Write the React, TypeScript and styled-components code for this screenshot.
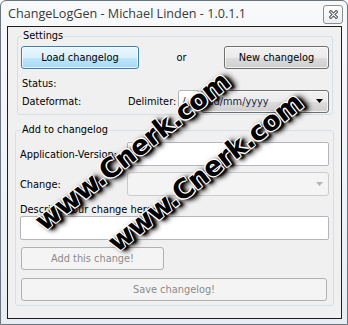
import React from "react";
import styled, { createGlobalStyle } from "styled-components";

const GlobalStyle = createGlobalStyle`
    html, body {
        margin: 0;
        padding: 0;
        background: #fff;
    }

    body {
        font-family: "DejaVu Sans", Tahoma, sans-serif;
        font-size: 9.8px;
        color: #000;
    }

    * {
        box-sizing: border-box;
    }
`;

const Window = styled.div`
    position: relative;
    display: flex;
    flex-direction: column;
    width: 348px;
    height: 325px;
    padding: 0 5px 5px 6px;
    border: 1px solid #6b7582;
    border-radius: 6px 6px 0 0;
    background: linear-gradient(#f8f9fb, #e8edf3);
    overflow: hidden;
`;

const TitleBar = styled.div`
    display: flex;
    align-items: center;
    height: 25px;
    padding-left: 1px;
`;

const Title = styled.span`
    flex: 1;
    font-family: "Open Sans", "Noto Sans", sans-serif;
    font-size: 12.6px;
    color: #3a3a3a;
    white-space: nowrap;
`;

const CloseButton = styled.div`
    display: flex;
    align-items: center;
    justify-content: center;
    align-self: flex-start;
    width: 20px;
    height: 19px;
    margin: 4px -1px 0 0;
    border: 1px solid #8a8d92;
    border-radius: 3px;
    background: linear-gradient(#fdfdfd, #eceff3);
`;

const Client = styled.div`
    flex: 1;
    display: flex;
    flex-direction: column;
    border: 1px solid #1e1e1e;
    background: #f0f0f0;
`;

const Group = styled.fieldset<{ $left: number; $right: number; $top: number }>`
    margin: ${p => p.$top}px ${p => p.$right}px 0 ${p => p.$left}px;
    padding: 0 4px 0 4px;
    border: 1px solid #d5dfe5;
    border-radius: 3px;
    min-width: 0;
`;

const Legend = styled.legend<{ $shift?: number }>`
    padding: 0 1px;
    margin-left: ${p => p.$shift ?? 0}px;
    line-height: 14px;
`;

const Stack = styled.div<{ $top: number; $bottom: number }>`
    display: flex;
    flex-direction: column;
    padding: ${p => p.$top}px 0 ${p => p.$bottom}px;
`;

const ButtonRow = styled.div`
    display: flex;
    align-items: center;
    justify-content: space-between;
    margin: 0 -1px;
`;

const Button = styled.div<{ $variant: "focused" | "normal" | "disabled"; $width?: number }>`
    display: flex;
    align-items: center;
    justify-content: center;
    height: 23px;
    width: ${p => (p.$width ? `${p.$width}px` : "auto")};
    border-radius: 3px;
    border: 1px solid
        ${p => (p.$variant === "focused" ? "#3c7fb1" : p.$variant === "normal" ? "#707070" : "#adb2b5")};
    background: ${p =>
        p.$variant === "focused"
            ? "linear-gradient(#eaf6fd 0%, #d9f0fc 50%, #bee6fd 51%, #a7d9f5 100%)"
            : p.$variant === "normal"
            ? "linear-gradient(#f2f2f2 0%, #ebebeb 50%, #dddddd 51%, #cfcfcf 100%)"
            : "#f4f4f4"};
    box-shadow: ${p => (p.$variant === "disabled" ? "none" : "inset 0 0 0 1px rgba(255, 255, 255, 0.7)")};
    color: ${p => (p.$variant === "disabled" ? "#8b8b8b" : "#000")};
    white-space: nowrap;
`;

const Row = styled.div<{ $height: number; $top?: number }>`
    display: flex;
    align-items: center;
    height: ${p => p.$height}px;
    margin-top: ${p => p.$top ?? 0}px;
`;

const Label = styled.span<{ $width?: number; $top?: number }>`
    flex: none;
    width: ${p => (p.$width ? `${p.$width}px` : "auto")};
    margin-top: ${p => p.$top ?? 0}px;
    line-height: 13px;
    white-space: nowrap;
`;

const TextBox = styled.div<{ $width?: number }>`
    display: flex;
    align-items: center;
    flex: ${p => (p.$width ? "none" : "1")};
    width: ${p => (p.$width ? `${p.$width}px` : "auto")};
    height: 100%;
    padding-left: 3px;
    border: 1px solid #b3b7bd;
    border-radius: 2px;
    background: #fff;
    color: #1a2644;
`;

const ComboBox = styled.div<{ $disabled?: boolean }>`
    display: flex;
    align-items: center;
    flex: 1;
    height: 100%;
    padding: 0 4px 0 5px;
    border: 1px solid ${p => (p.$disabled ? "#c9cbcf" : "#707070")};
    border-radius: 3px;
    background: ${p =>
        p.$disabled ? "#f4f4f4" : "linear-gradient(#f2f2f2 0%, #ebebeb 50%, #dddddd 51%, #cfcfcf 100%)"};
    box-shadow: ${p => (p.$disabled ? "none" : "inset 0 0 0 1px rgba(255, 255, 255, 0.7)")};
    color: #1a2644;
`;

const ComboText = styled.span`
    flex: 1;
`;

const Watermark = styled.span<{ $x: number; $y: number }>`
    position: absolute;
    left: ${p => p.$x}px;
    top: ${p => p.$y}px;
    transform: translate(-50%, -50%) rotate(-38deg);
    font-family: "DejaVu Sans", sans-serif;
    font-weight: bold;
    font-size: 27px;
    letter-spacing: -0.5px;
    color: #000;
    white-space: nowrap;
    pointer-events: none;
    text-shadow: -1px -1px 0 #fff, 1px -1px 0 #fff, -1px 1px 0 #fff, 1px 1px 0 #fff, 3px 3px 2px #000,
        3px 4px 5px #000, 4px 3px 6px #000;
`;

const Arrow: React.FC<{ color: string }> = ({ color }) => (
    <svg width="8" height="5" viewBox="0 0 8 5">
        <polygon points="0,0 7,0 3.5,4" fill={color} />
    </svg>
);

const CloseGlyph = () => (
    <svg width="9" height="9" viewBox="0 0 10 10">
        <path d="M2 2 L8 8 M8 2 L2 8" stroke="#4d4d4d" strokeWidth="3.4" strokeLinecap="square" />
        <path d="M2 2 L8 8 M8 2 L2 8" stroke="#fff" strokeWidth="1.3" strokeLinecap="square" />
    </svg>
);

export default function App() {
    return (
        <>
            <GlobalStyle />
            <Window>
                <TitleBar>
                    <Title>ChangeLogGen - Michael Linden - 1.0.1.1</Title>
                    <CloseButton>
                        <CloseGlyph />
                    </CloseButton>
                </TitleBar>
                <Client>
                    <Group $left={9} $right={8} $top={2}>
                        <Legend>Settings</Legend>
                        <Stack $top={3} $bottom={1}>
                            <ButtonRow>
                                <Button $variant="focused" $width={118}>
                                    Load changelog
                                </Button>
                                <span>or</span>
                                <Button $variant="normal" $width={105}>
                                    New changelog
                                </Button>
                            </ButtonRow>
                            <Label $top={8}>Status:</Label>
                            <Row $height={23}>
                                <Label $width={106}>Dateformat:</Label>
                                <Label>Delimiter:</Label>
                                <Row $height={23} style={{ flex: 1, marginLeft: 2, marginRight: -1, gap: 2 }}>
                                    <TextBox $width={21}>/</TextBox>
                                    <ComboBox>
                                        <ComboText>dd/mm/yyyy</ComboText>
                                        <Arrow color="#000" />
                                    </ComboBox>
                                </Row>
                            </Row>
                        </Stack>
                    </Group>
                    <Group $left={7} $right={7} $top={8}>
                        <Legend $shift={1}>Add to changelog</Legend>
                        <Stack $top={5} $bottom={4}>
                            <Row $height={24}>
                                <Label $width={107}>Application-Version:</Label>
                                <TextBox />
                            </Row>
                            <Row $height={24} $top={6}>
                                <Label $width={107}>Change:</Label>
                                <ComboBox $disabled>
                                    <ComboText />
                                    <Arrow color="#b4b4b4" />
                                </ComboBox>
                            </Row>
                            <Label $top={7}>Describe your change here:</Label>
                            <Row $height={24}>
                                <TextBox />
                            </Row>
                            <Row $height={23} $top={7}>
                                <Button $variant="disabled" $width={143} style={{ marginLeft: 1 }}>
                                    Add this change!
                                </Button>
                            </Row>
                            <Row $height={23} $top={8}>
                                <Button $variant="disabled" style={{ flex: 1, margin: "0 2px 0 1px" }}>
                                    Save changelog!
                                </Button>
                            </Row>
                        </Stack>
                    </Group>
                </Client>
                <Watermark $x={131} $y={150}>www.Cnerk.com</Watermark>
                <Watermark $x={204} $y={171}>www.Cnerk.com</Watermark>
            </Window>
        </>
    );
}
